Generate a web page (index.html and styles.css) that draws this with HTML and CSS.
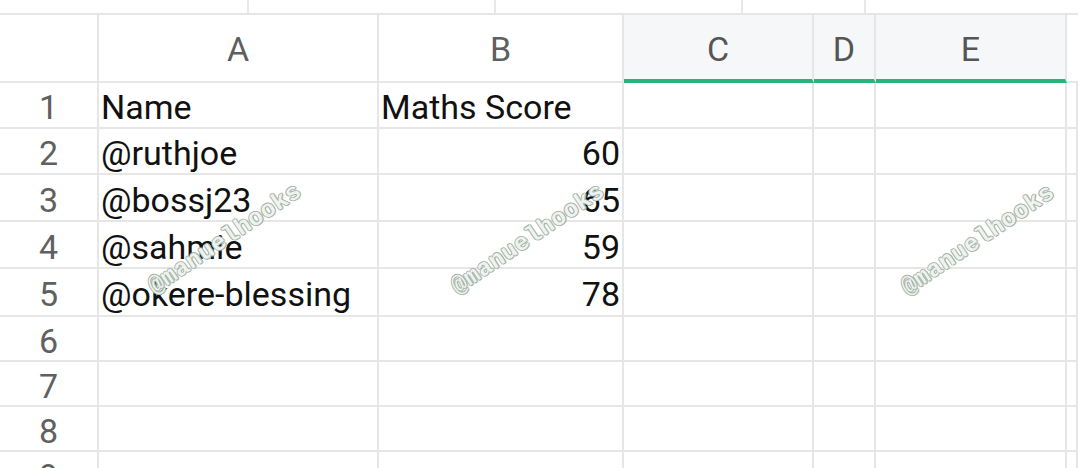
FILE: index.html
```html
<!DOCTYPE html>
<html>
<head>
<meta charset="utf-8">
<link rel="stylesheet" href="styles.css">
</head>
<body>
<div class="page">
  <div class="strip">
    <div class="strip-cell w248"></div>
    <div class="strip-cell w247"></div>
    <div class="strip-cell w247"></div>
    <div class="strip-cell w123"></div>
    <div class="strip-cell last"></div>
  </div>
  <div class="sheet">
    <div class="hd corner"></div>
    <div class="hd">A</div>
    <div class="hd">B</div>
    <div class="hd sel">C</div>
    <div class="hd sel">D</div>
    <div class="hd sel">E</div>
    <div class="hd blank"></div>

    <div class="rn">1</div><div class="c">Name</div><div class="c">Maths Score</div><div class="c"></div><div class="c"></div><div class="c"></div><div class="c"></div>
    <div class="rn">2</div><div class="c">@ruthjoe</div><div class="c num">60</div><div class="c"></div><div class="c"></div><div class="c"></div><div class="c"></div>
    <div class="rn">3</div><div class="c">@bossj23</div><div class="c num">65</div><div class="c"></div><div class="c"></div><div class="c"></div><div class="c"></div>
    <div class="rn">4</div><div class="c">@sahmie</div><div class="c num">59</div><div class="c"></div><div class="c"></div><div class="c"></div><div class="c"></div>
    <div class="rn">5</div><div class="c">@okere-blessing</div><div class="c num">78</div><div class="c"></div><div class="c"></div><div class="c"></div><div class="c"></div>
    <div class="rn">6</div><div class="c"></div><div class="c"></div><div class="c"></div><div class="c"></div><div class="c"></div><div class="c"></div>
    <div class="rn">7</div><div class="c"></div><div class="c"></div><div class="c"></div><div class="c"></div><div class="c"></div><div class="c"></div>
    <div class="rn">8</div><div class="c"></div><div class="c"></div><div class="c"></div><div class="c"></div><div class="c"></div><div class="c"></div>
    <div class="rn">9</div><div class="c"></div><div class="c"></div><div class="c"></div><div class="c"></div><div class="c"></div><div class="c"></div>
  </div>
  <div class="wm wm1">@manuelhooks</div>
  <div class="wm wm2">@manuelhooks</div>
  <div class="wm wm3">@manuelhooks</div>
</div>
</body>
</html>
```

FILE: styles.css
```css
html, body {
  margin: 0;
  padding: 0;
  background: #ffffff;
}
.page {
  position: relative;
  width: 1078px;
  height: 468px;
  overflow: hidden;
  font-family: Roboto, "Liberation Sans", sans-serif;
}
.strip {
  display: flex;
  height: 13px;
  border-bottom: 2px solid #e6e6e6;
}
.strip-cell {
  border-right: 2px solid #e8e8e8;
  box-sizing: border-box;
}
.w248 { width: 249px; }
.w247 { width: 247px; }
.w123 { width: 123px; }
.strip-cell.last { flex: 1; border-right: none; }

.sheet {
  display: grid;
  grid-template-columns: 99px 280px 245px 190px 62px 191px 11px;
  grid-template-rows: 68px 46px 46px 47px 47px 48px 45px 45px 45px 46px;
}
.sheet > div {
  box-sizing: border-box;
  border-right: 2px solid #e6e6e6;
  border-bottom: 2px solid #e6e6e6;
  display: flex;
  align-items: center;
  overflow: visible;
  white-space: nowrap;
}
.hd {
  justify-content: center;
  font-size: 34px;
  color: #5f5f5f;
  background: #ffffff;
  padding-top: 1px;
}
.hd.sel {
  background: #f6f7f8;
  border-bottom: 4px solid #2db27c !important;
  color: #555555;
  padding-top: 3px;
}
.hd.blank {
  border-right: none !important;
}
.rn {
  justify-content: center;
  font-size: 34px;
  color: #606060;
  padding-top: 4px;
}
.c {
  font-size: 34px;
  color: #111111;
  padding-left: 2px;
  padding-right: 2px;
  padding-top: 4px;
}
.c.num {
  justify-content: flex-end;
}
.wm {
  position: absolute;
  font-family: "Liberation Mono", "DejaVu Sans Mono", monospace;
  font-weight: bold;
  font-size: 24px;
  letter-spacing: 0.5px;
  color: #eef3ef;
  text-shadow:
    1px 0 0 #9fb0a6, -1px 0 0 #9fb0a6, 0 1px 0 #9fb0a6, 0 -1px 0 #9fb0a6,
    1px 1px 1px #b7c4bc;
  transform: translate(-50%, -50%) rotate(-34deg);
  white-space: nowrap;
  pointer-events: none;
}
.wm1 { left: 225px; top: 239px; }
.wm2 { left: 528px; top: 239px; }
.wm3 { left: 978px; top: 240px; }
```
